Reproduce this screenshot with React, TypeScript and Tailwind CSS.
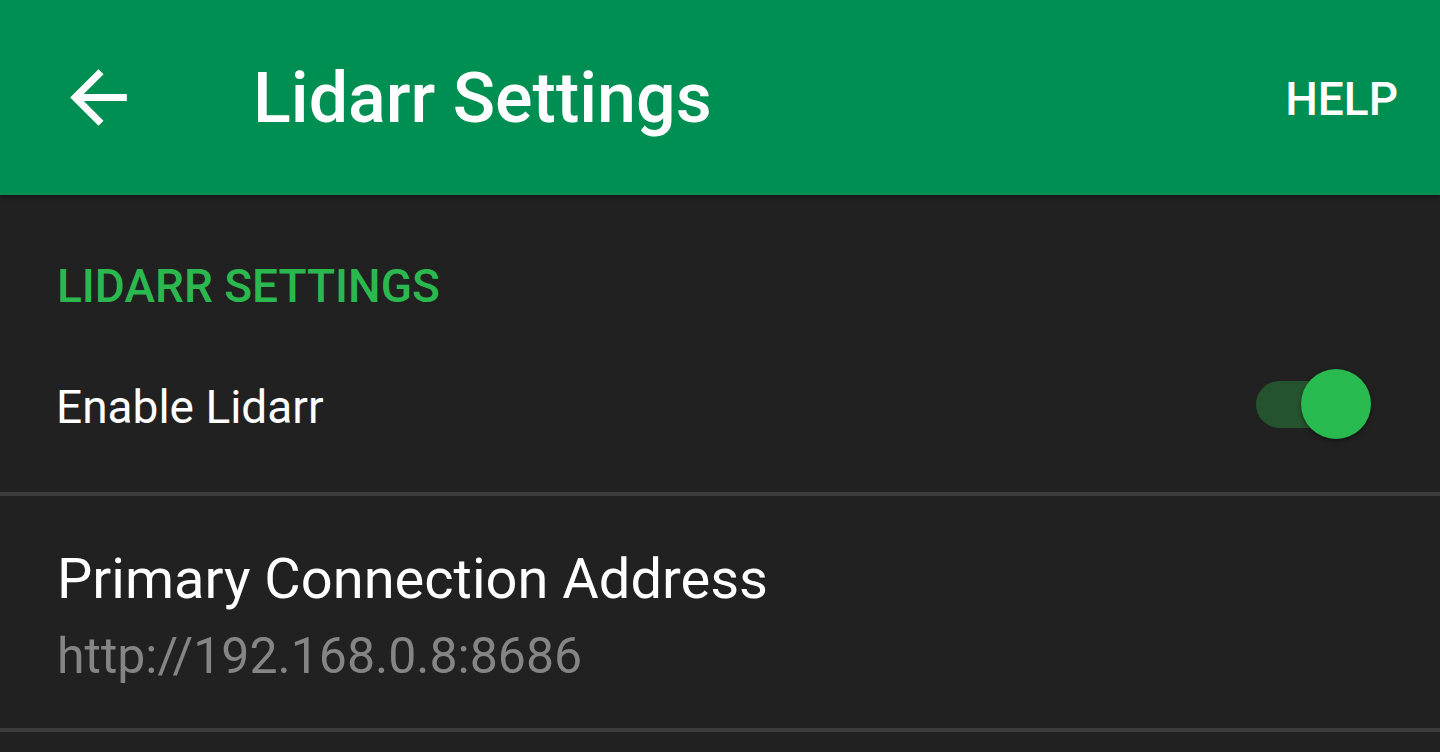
import React from "react";

export default function App() {
  const font = { fontFamily: "Roboto, 'Noto Sans', sans-serif" };
  return (
    <div className="w-[1440px] h-[752px] overflow-hidden bg-[#212121]" style={font}>
      <div className="relative z-10 h-[195px] bg-[#008f52] flex items-center shadow-[0_2px_4px_rgba(0,0,0,0.35)]">
        <svg viewBox="0 0 24 24" className="ml-[56px] w-[85px] h-[85px] shrink-0" fill="#ffffff">
          <path d="M20 11H7.83l5.59-5.59L12 4l-8 8 8 8 1.41-1.41L7.83 13H20v-2z" />
        </svg>
        <div className="ml-[112px] text-[70px] leading-none font-medium text-white">Lidarr Settings</div>
        <div className="ml-auto mr-[42px] mt-[2px] text-[46px] leading-none font-medium text-white">HELP</div>
      </div>
      <div className="pl-[57px] pt-[68px]">
        <div className="text-[46px] leading-none font-medium text-[#2bb94f]">LIDARR SETTINGS</div>
      </div>
      <div className="flex items-start justify-between h-[183px] pl-[56px] pr-[69px]">
        <div className="mt-[75px] text-[46px] leading-none text-white">Enable Lidarr</div>
        <div className="relative mt-[60px] w-[115px] h-[70px]">
          <div className="absolute left-0 top-[12px] w-[84px] h-[47px] rounded-full bg-[#25522f]" />
          <div className="absolute right-0 top-0 w-[70px] h-[70px] rounded-full bg-[#29bb4f] shadow-[0_2px_4px_rgba(0,0,0,0.4)]" />
        </div>
      </div>
      <div className="h-[4px] bg-[#3c3c3c]" />
      <div className="pl-[57px] pt-[55px] pb-[47px]">
        <div className="text-[56px] leading-none text-white">Primary Connection Address</div>
        <div className="mt-[24px] text-[50px] leading-none text-[#858585]">http://192.168.0.8:8686</div>
      </div>
      <div className="h-[4px] bg-[#3c3c3c]" />
    </div>
  );
}
